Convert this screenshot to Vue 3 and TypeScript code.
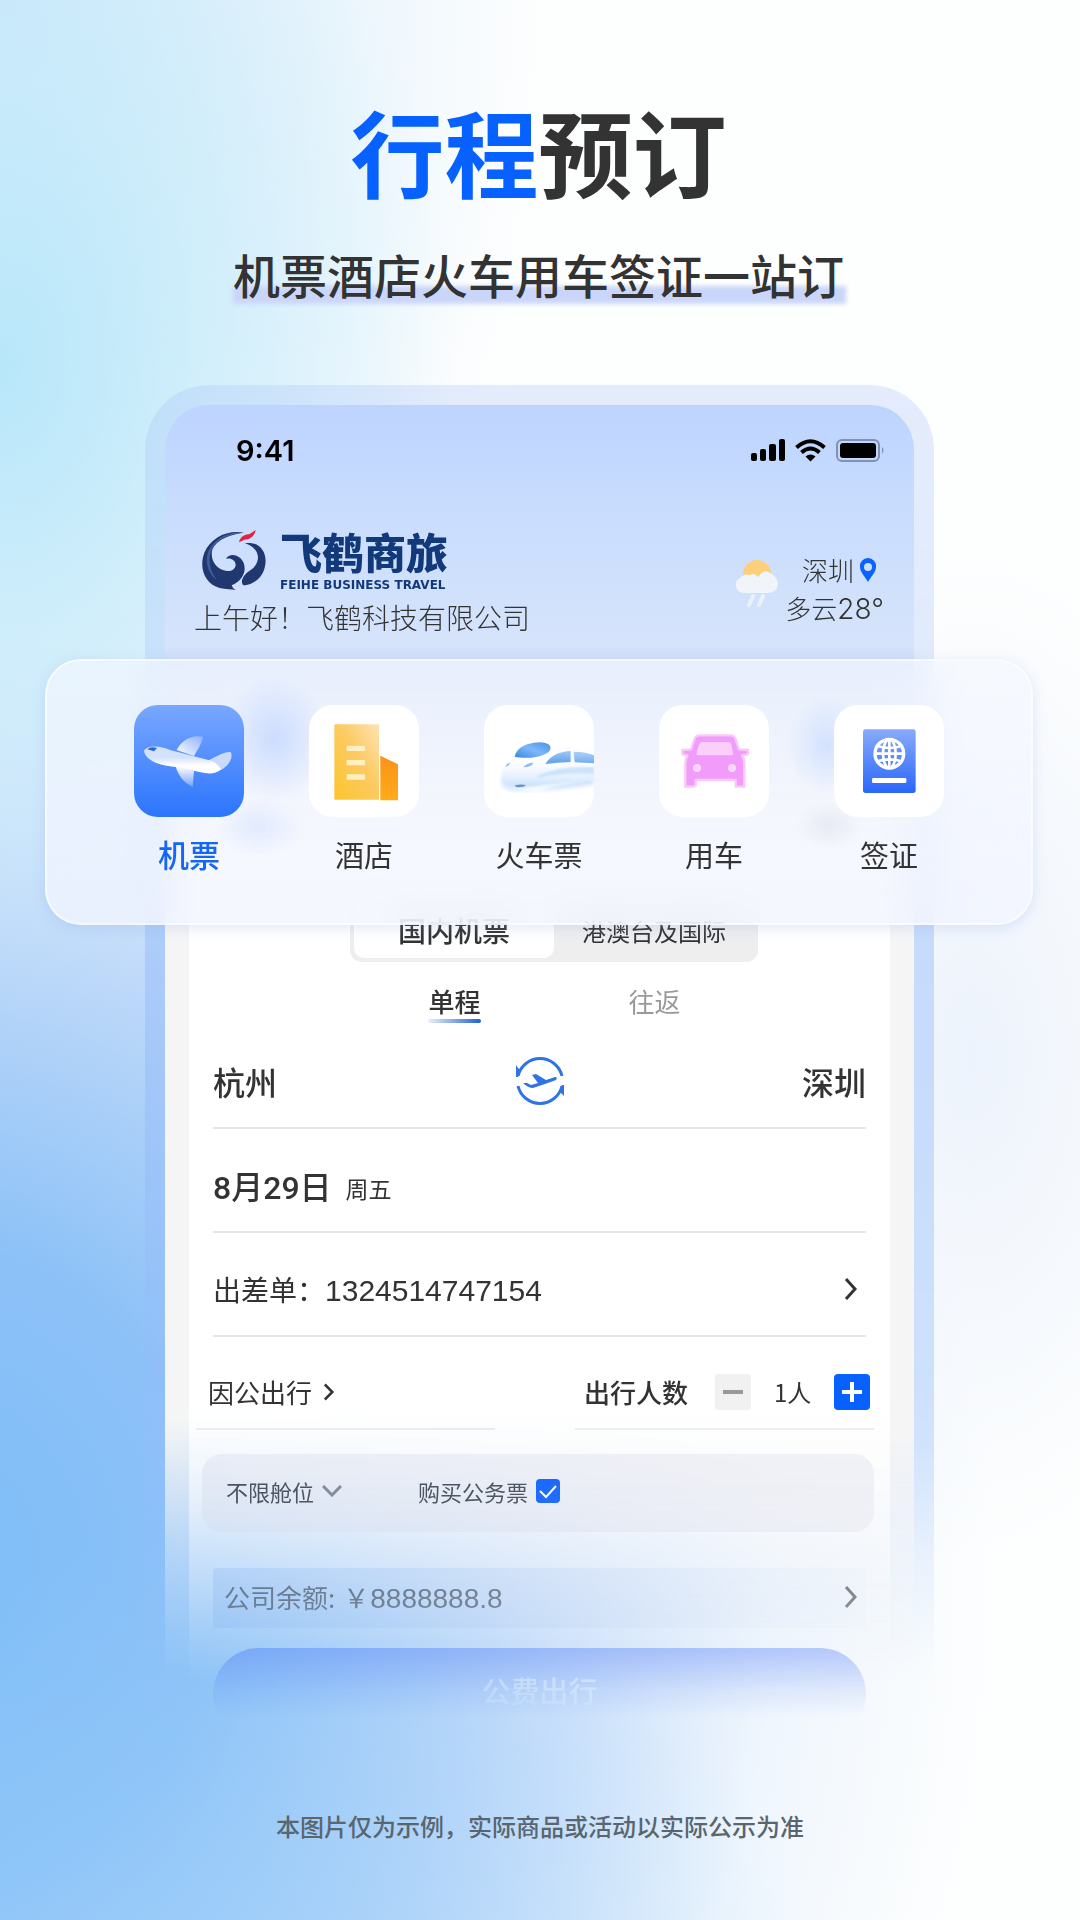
<script setup lang="ts">
import { computed, ref } from 'vue'

type ServiceKey = 'flight' | 'hotel' | 'train' | 'car' | 'visa'

interface Service {
  key: ServiceKey
  label: string
}

const services: Service[] = [
  { key: 'flight', label: '机票' },
  { key: 'hotel', label: '酒店' },
  { key: 'train', label: '火车票' },
  { key: 'car', label: '用车' },
  { key: 'visa', label: '签证' },
]

const activeService = ref<ServiceKey>('flight')
const region = ref<'domestic' | 'international'>('domestic')
const trip = ref<'single' | 'round'>('single')
const cities = ref<[string, string]>(['杭州', '深圳'])
const passengers = ref(1)
const official = ref(true)
const cabin = ref('any')

const passengerText = computed(() => `${passengers.value}人`)

function swapCities(): void {
  cities.value = [cities.value[1], cities.value[0]]
}
function addPassenger(step: number): void {
  passengers.value = Math.max(1, passengers.value + step)
}
</script>

<template>
  <main class="page">
    <header class="hero">
      <h1><span class="accent">行程</span>预订</h1>
      <p class="subtitle">机票酒店火车用车签证一站订</p>
    </header>

    <div class="stage">
      <section class="phone">
        <div class="screen">
          <div class="status">
            <span class="clock">9:41</span>
            <svg class="signals" viewBox="0 0 136 24" aria-hidden="true">
              <rect x="1" y="14" width="6" height="8" rx="2" />
              <rect x="10" y="10" width="6" height="12" rx="2" />
              <rect x="19" y="5" width="7" height="17" rx="2" />
              <rect x="29" y="0" width="6" height="22" rx="2" />
              <g fill="none" stroke="#000" stroke-width="4">
                <path d="M46.500 8.500Q60.500 -4 74.500 8.500" />
                <path d="M51.500 13.500Q60.500 5.500 69.500 13.500" />
              </g>
              <path d="M55.500 17.500Q60.500 13.500 65.500 17.500L60.500 22.500Z" />
              <rect x="87" y="1" width="42" height="21" rx="5" fill="none" stroke="#8390b0" stroke-width="2" />
              <rect x="90" y="4" width="36" height="15" rx="3" />
              <path d="M132 8Q135 11 132 15Z" fill="#8390b0" />
            </svg>
          </div>

          <div class="company">
            <div>
              <div class="brand">
                <svg class="emblem" viewBox="214 474 198 186" aria-hidden="true">
                  <path fill="#20386f" d="M342 485C292 476 244 500 224 545C206 594 228 640 270 651C288 656 305 654 318 657Q307 650 306 643C336 632 352 602 342 576C333 551 300 543 289 563C304 560 317 567 318 581C317 598 298 604 280 597C256 588 243 565 247 541C253 510 298 490 342 485Z" />
                  <path fill="#3d5d9c" d="M342 485C296 480 254 502 236 541C224 575 236 610 262 628C238 596 234 562 247 535C259 505 300 489 342 485Z" />
                  <path fill="#20386f" d="M346 517C390 508 417 548 405 590C396 626 361 646 340 642C331 630 342 610 362 598C393 578 397 534 346 517Z" />
                  <path fill="#e0243f" d="M328 514C332 494 350 490 360 489L378 477C374 499 358 506 345 506Z" />
                </svg>
                <div class="wordmark">
                  <strong>飞鹤商旅</strong>
                  <small>FEIHE BUSINESS TRAVEL</small>
                </div>
              </div>
              <p class="greeting">上午好！飞鹤科技有限公司</p>
            </div>

            <div class="weather">
              <svg class="sky" viewBox="0 0 44 48" aria-hidden="true">
                <circle cx="23" cy="15" r="14" fill="#fdce7b" />
                <path d="M9 34A8 8 0 0 1 6 19Q10 14 16 16Q20 13 24 18Q30 9 36 14Q44 18 44 26Q42 34 34 34Z" fill="#f1f4f9" />
                <path d="M19 37L15 46M29 37L25 46" stroke="#e9f1fb" stroke-width="4" stroke-linecap="round" />
              </svg>
              <div class="forecast">
                <span class="place">深圳
                  <svg class="pin" viewBox="0 0 16 24" aria-hidden="true">
                    <path fill="#0a62ff" fill-rule="evenodd" d="M8 0A8 8 0 0 0 0 9C0 14 6 20 8 24C10 20 16 14 16 9A8 8 0 0 0 8 0ZM8 5A4 4 0 1 1 8 13A4 4 0 1 1 8 5Z" />
                  </svg>
                </span>
                <span>多云<b>28°</b></span>
              </div>
            </div>
          </div>

          <div class="panel">
            <div class="segment">
              <button type="button" :class="{ on: region === 'domestic' }" @click="region = 'domestic'">国内机票</button>
              <button type="button" :class="{ on: region === 'international' }" @click="region = 'international'">港澳台及国际</button>
            </div>

            <div class="trip">
              <button type="button" :class="{ on: trip === 'single' }" @click="trip = 'single'">单程</button>
              <button type="button" :class="{ on: trip === 'round' }" @click="trip = 'round'">往返</button>
            </div>

            <div class="row cities">
              <span>{{ cities[0] }}</span>
              <button type="button" class="swap" aria-label="交换城市" @click="swapCities">
                <svg viewBox="0 0 50 48" aria-hidden="true">
                  <g fill="none" stroke="#2f74e2" stroke-width="3">
                    <path d="M3 19A22.600 22.600 0 0 1 47 19" />
                    <path d="M3 29A22.600 22.600 0 0 0 47 29" />
                  </g>
                  <path fill="#2f74e2" d="M1 8L3 11L5 13L3 20L1 20ZM49 39L47 37L45 35L47 28L49 28Z" />
                  <path fill="#2f74e2" d="M8 26L12 26L16 28L23 26L17 18L21 17L31 23L40 20Q43 20 41 23L30 27L18 31Q13 31 8 26Z" />
                </svg>
              </button>
              <span>{{ cities[1] }}</span>
            </div>

            <div class="row date"><strong>8月29日</strong><span>周五</span></div>

            <div class="row order">
              <span>出差单：<b>1324514747154</b></span>
              <svg class="arrow" viewBox="0 0 14 24" aria-hidden="true"><path d="M2 2L11 12L2 22" /></svg>
            </div>

            <div class="travel">
              <div class="half purpose">
                <span>因公出行</span>
                <svg class="arrow small" viewBox="0 0 14 24" aria-hidden="true"><path d="M2 3L11 12L2 21" /></svg>
              </div>
              <div class="half people">
                <span>出行人数</span>
                <button type="button" class="step minus" aria-label="减少" @click="addPassenger(-1)"></button>
                <output>{{ passengerText }}</output>
                <button type="button" class="step plus" aria-label="增加" @click="addPassenger(1)"></button>
              </div>
            </div>

            <div class="options">
              <div class="cabin">
                <select v-model="cabin" aria-label="舱位">
                  <option value="any">不限舱位</option>
                  <option value="economy">经济舱</option>
                </select>
                <svg viewBox="0 0 20 12" aria-hidden="true"><path d="M1 1L10 10L19 1" fill="none" stroke="#7b8594" stroke-width="3" /></svg>
              </div>
              <label class="official">购买公务票<input v-model="official" type="checkbox" /></label>
            </div>

            <div class="balance">
              <span>公司余额:</span><span class="amount">￥<b>8888888.8</b></span>
              <svg class="arrow" viewBox="0 0 14 24" aria-hidden="true"><path d="M2 2L11 12L2 22" /></svg>
            </div>

            <button type="button" class="submit">公费出行</button>
          </div>
        </div>
      </section>

      <nav class="services">
        <a v-for="item in services" :key="item.key" href="#" :class="{ on: item.key === activeService }" @click.prevent="activeService = item.key">
          <span class="tile" :class="item.key">
            <svg v-if="item.key === 'flight'" viewBox="312 195 330 336" aria-hidden="true">
              <defs>
                <linearGradient id="wingTop" x1="1" y1="0" x2="0" y2="1"><stop offset="0" stop-color="#8db0ff" /><stop offset="1" stop-color="#fff" /></linearGradient>
                <linearGradient id="wingLow" x1="0" y1="0" x2="0" y2="1"><stop offset="0" stop-color="#fff" /><stop offset="1" stop-color="#79a3fd" /></linearGradient>
                <linearGradient id="body" x1="0" y1="0" x2="0" y2="1"><stop offset="0.400" stop-color="#d3e1fb" /><stop offset="0.700" stop-color="#fff" /></linearGradient>
              </defs>
              <path fill="url(#wingTop)" d="M440 330C455 300 485 283 519 290C512 320 500 332 492 348Z" />
              <path fill="#c9dafb" d="M530 362C560 352 575 335 602 336C612 352 594 384 566 392Z" />
              <path fill="url(#body)" d="M342 332C350 316 390 315 420 330L535 360C552 362 560 370 574 388C556 402 540 402 520 398L432 380C390 376 346 362 342 332Z" />
              <path fill="url(#wingLow)" d="M437 378L492 392L488 440C462 430 443 405 437 378Z" />
              <path fill="#2668df" d="M352 328Q362 318 381 324L372 334Z" />
            </svg>
            <svg v-else-if="item.key === 'hotel'" viewBox="833 195 330 336" aria-hidden="true">
              <defs>
                <linearGradient id="tower" x1="1" y1="0" x2="0" y2="1"><stop offset="0" stop-color="#fde3b4" /><stop offset="0.450" stop-color="#fcca62" /><stop offset="1" stop-color="#fcc52c" /></linearGradient>
                <linearGradient id="annex" x1="0" y1="0" x2="0" y2="1"><stop offset="0" stop-color="#fb9218" /><stop offset="1" stop-color="#ffab1a" /></linearGradient>
              </defs>
              <rect x="909" y="253" width="134" height="226" rx="3" fill="url(#tower)" />
              <path d="M1047 347L1100 373V481H1047Z" fill="url(#annex)" />
              <path d="M946 325H1001M946 368H1001M946 411H1001" stroke="#ffefc2" stroke-width="16" />
            </svg>
            <svg v-else-if="item.key === 'train'" viewBox="12 15 330 336" aria-hidden="true">
              <defs>
                <linearGradient id="cockpit" x1="0" y1="1" x2="1" y2="0"><stop offset="0" stop-color="#3a86dd" /><stop offset="0.500" stop-color="#7db7fb" /><stop offset="1" stop-color="#4a93e6" /></linearGradient>
                <linearGradient id="hull" x1="0" y1="0" x2="0" y2="1"><stop offset="0.500" stop-color="#fbfdff" /><stop offset="0.800" stop-color="#e2effd" /><stop offset="1" stop-color="#c3dffa" /></linearGradient>
                <linearGradient id="pane" x1="0" y1="0" x2="0" y2="1"><stop offset="0" stop-color="#9ccafa" /><stop offset="1" stop-color="#5c9fe8" /></linearGradient>
                <filter id="glow"><feGaussianBlur stdDeviation="7" /></filter>
                <filter id="soft"><feGaussianBlur stdDeviation="3" /></filter>
              </defs>
              <path d="M64 242Q130 290 220 258L342 234V252Q200 274 120 274Q60 268 64 242Z" fill="#c4e0fb" filter="url(#glow)" />
              <path d="M62 232C66 200 86 172 108 155C125 126 190 120 210 138L270 140L350 152V240C280 248 215 252 160 260C115 266 58 262 62 232Z" fill="url(#hull)" filter="url(#soft)" />
              <path d="M104 170C110 140 145 127 180 127C218 128 218 150 200 160C170 177 130 175 104 170Z" fill="url(#cockpit)" />
              <path d="M196 192C212 166 240 154 272 153V186Q230 188 196 192Z" fill="url(#pane)" />
              <path d="M281 155Q320 156 342 166V190L284 187Z" fill="url(#pane)" opacity="0.850" />
              <path d="M130 202Q140 188 160 188Q158 200 130 202ZM76 200Q82 188 90 188Q88 198 76 200Z" fill="#8dbdf2" />
              <path d="M170 228Q240 196 346 202V222Q240 216 180 234Z" fill="#cbe3fb" filter="url(#soft)" />
              <path d="M104 256Q122 252 138 255Q130 264 108 261Z" fill="#6a93c9" />
            </svg>
            <svg v-else-if="item.key === 'car'" viewBox="378 195 330 336" aria-hidden="true">
              <g stroke="#f9c9fb" stroke-width="7" fill="#f19bfa" stroke-linejoin="round">
                <path d="M500 286H592Q604 286 608 298L618 328L645 330V343L627 346Q634 356 634 370V440H608V420H488V436L480 440H457V370Q457 356 464 346L448 343V330L474 328L484 298Q488 286 500 286Z" />
              </g>
              <path d="M506 306H588Q596 306 600 342Q601 346 594 346H496Q489 346 491 340Q498 306 506 306Z" fill="#fad0fb" />
              <circle cx="492" cy="384" r="12" fill="#fbd6fc" /><circle cx="597" cy="384" r="12" fill="#fbd6fc" />
            </svg>
            <svg v-else viewBox="898 195 330 336" aria-hidden="true">
              <defs>
                <linearGradient id="cover" x1="0" y1="0" x2="0" y2="1"><stop offset="0" stop-color="#88aafb" /><stop offset="1" stop-color="#2867fb" /></linearGradient>
              </defs>
              <rect x="985" y="268" width="158" height="191" rx="8" fill="url(#cover)" />
              <g fill="none" stroke="#fff" stroke-width="8">
                <circle cx="1064" cy="341" r="43" stroke-width="10" />
                <ellipse cx="1064" cy="341" rx="19" ry="43" />
                <path d="M1064 298V384M1021 341H1107M1028 318Q1064 330 1100 318M1028 364Q1064 352 1100 364" />
              </g>
              <rect x="1012" y="414" width="103" height="15" rx="4" fill="#fff" />
            </svg>
          </span>
          <span class="label">{{ item.label }}</span>
        </a>
      </nav>
    </div>

    <footer class="note">本图片仅为示例，实际商品或活动以实际公示为准</footer>
  </main>
</template>

<style>
body {
  margin: 0;
}
</style>

<style scoped>
.page {
  box-sizing: border-box;
  min-height: 100vh;
  padding-top: 94px;
  padding-bottom: 70px;
  color: #333;
  font-family: "Noto Sans CJK SC", sans-serif;
  background:
    radial-gradient(ellipse 42% 34% at 0% 19%, #b8e7fa 0%, rgba(194, 235, 250, 0.6) 45%, rgba(255, 255, 255, 0) 100%),
    radial-gradient(ellipse 55% 24% at 20% 104%, rgba(150, 205, 250, 0.6) 0%, rgba(255, 255, 255, 0) 100%),
    radial-gradient(ellipse 100% 62% at -8% 82%, #7dbdf7 0%, rgba(134, 190, 247, 0.95) 28%, rgba(178, 209, 248, 0.8) 55%, rgba(222, 236, 252, 0.45) 80%, rgba(255, 255, 255, 0) 100%),
    radial-gradient(ellipse 50% 45% at 0% 0%, #cfe7fa 0%, rgba(255, 255, 255, 0) 100%),
    radial-gradient(ellipse 24% 26% at 90% 55%, #edf3fc 0%, rgba(255, 255, 255, 0) 100%),
    #fdfefe;
}
button,
select {
  padding: 0;
  border: 0;
  background: none;
  color: inherit;
  font: inherit;
}
p,
h1 {
  margin: 0;
}
b {
  font-weight: inherit;
}
.hero {
  display: flex;
  flex-direction: column;
  align-items: center;
  padding-right: 3px;
}
h1 {
  font-size: 94px;
  line-height: 112px;
  font-weight: 700;
}
.accent {
  color: #0661ff;
}
.subtitle {
  position: relative;
  z-index: 0;
  margin-top: 36px;
  font-size: 47px;
  line-height: 64px;
  font-weight: 500;
}
.subtitle::before {
  content: "";
  position: absolute;
  z-index: -1;
  inset: auto -2px 2px 0;
  height: 18px;
  background: #cad6f9;
  filter: blur(2px);
}
.stage {
  position: relative;
  margin-top: 79px;
}
.phone {
  margin: 0 146px 0 145px;
  padding: 20px 20px 0;
  border-radius: 64px 64px 0 0;
  background: linear-gradient(rgba(165, 190, 248, 0.28), rgba(165, 195, 250, 0.3) 280px, rgba(140, 180, 250, 0.42) 550px, rgba(150, 190, 250, 0.4) 1060px, rgba(150, 190, 250, 0) 1300px);
  -webkit-mask-image: linear-gradient(#000 1025px, rgba(0, 0, 0, 0.88) 1115px, rgba(0, 0, 0, 0.68) 1215px, rgba(0, 0, 0, 0.5) 1265px, rgba(0, 0, 0, 0.16) 1305px, transparent 1332px);
  mask-image: linear-gradient(#000 1025px, rgba(0, 0, 0, 0.88) 1115px, rgba(0, 0, 0, 0.68) 1215px, rgba(0, 0, 0, 0.5) 1265px, rgba(0, 0, 0, 0.16) 1305px, transparent 1332px);
}
.screen {
  border-radius: 44px 44px 0 0;
  background: linear-gradient(#bdd4ff, #c8dcfe 100px, #d6e4fb 240px, #cfdffa 255px, #f5f5f5 400px, #f5f5f5 1020px, rgba(245, 245, 245, 0) 1280px);
}
.status {
  display: flex;
  align-items: center;
  justify-content: space-between;
  height: 92px;
  padding: 0 28px 0 71px;
}
.clock {
  color: #000;
  font: 600 29px/40px Inter, sans-serif;
}
.signals {
  width: 136px;
  height: 24px;
}
.company {
  display: flex;
  justify-content: space-between;
  height: 132px;
  padding: 32px 30px 0 29px;
}
.brand {
  display: flex;
  gap: 13px;
  padding-left: 7px;
}
.emblem {
  width: 66px;
  height: 62px;
}
.wordmark {
  display: flex;
  flex-direction: column;
  color: #123a7a;
}
.wordmark strong {
  font-size: 42px;
  line-height: 44px;
  font-weight: 900;
}
.wordmark small {
  margin-top: 4px;
  font: 700 12px/16px "DejaVu Sans", sans-serif;
}
.greeting {
  margin-top: 6px;
  font-size: 28px;
  line-height: 36px;
  font-weight: 300;
}
.weather {
  display: flex;
  gap: 7px;
  padding-top: 22px;
}
.sky {
  width: 44px;
  height: 48px;
  padding-top: 8px;
}
.forecast {
  display: flex;
  flex-direction: column;
  align-items: flex-end;
  font-size: 26px;
  line-height: 38px;
  font-weight: 300;
}
.forecast b {
  font-family: Inter, sans-serif;
  font-size: 28px;
}
.place {
  display: flex;
  align-items: center;
  gap: 6px;
  padding-right: 8px;
}
.pin {
  width: 16px;
  height: 24px;
}
.panel {
  margin: 0 24px;
  padding: 239px 24px 0;
  background: linear-gradient(rgba(255, 255, 255, 0) 120px, #fff 210px, #fff 740px, rgba(255, 255, 255, 0) 1030px);
}
.segment {
  display: flex;
  box-sizing: border-box;
  width: 408px;
  height: 62px;
  margin: 0 auto 0 137px;
  padding: 4px;
  border-radius: 12px;
  background: #eee;
}
.segment button {
  flex: 1;
  padding-bottom: 2px;
  border-radius: 10px;
  font-size: 24px;
}
.segment .on {
  background: #fff;
  font-size: 28px;
  font-weight: 500;
}
.trip {
  display: flex;
  justify-content: center;
  box-sizing: border-box;
  gap: 148px;
  height: 63px;
  padding: 12px 0 0 30px;
}
.trip button {
  position: relative;
  height: 52px;
  color: #999;
  font-size: 26px;
}
.trip .on {
  color: #333;
  font-weight: 500;
}
.trip .on::after {
  content: "";
  position: absolute;
  inset: auto 0 3px 0;
  height: 4px;
  border-radius: 2px;
  background: linear-gradient(90deg, #e9effc, #1d62cf);
}
.row {
  display: flex;
  align-items: center;
  justify-content: space-between;
  box-sizing: border-box;
  height: 104px;
  padding-top: 10px;
  border-bottom: 2px solid #e6e6e6;
}
.cities {
  font-size: 32px;
  font-weight: 500;
}
.swap {
  width: 50px;
  height: 48px;
}
.swap svg {
  display: block;
}
.date {
  justify-content: flex-start;
  gap: 14px;
  padding-top: 16px;
  font-size: 23px;
}
.date strong {
  font: 500 32px/48px Roboto, "Noto Sans CJK SC", sans-serif;
}
.order {
  font-size: 28px;
  padding-right: 8px;
}
.order b {
  font-family: "Liberation Sans", sans-serif;
  font-size: 30px;
}
.arrow {
  width: 14px;
  height: 24px;
  fill: none;
  stroke: #333;
  stroke-width: 3;
}
.arrow.small {
  height: 20px;
}
.travel {
  display: flex;
  justify-content: space-between;
  margin: 0 -8px 0 -17px;
}
.half {
  display: flex;
  align-items: center;
  box-sizing: border-box;
  width: 299px;
  height: 93px;
  padding-top: 18px;
  border-bottom: 2px solid #ededed;
  font-size: 26px;
}
.purpose {
  gap: 10px;
  padding-left: 12px;
}
.people {
  gap: 23px;
  padding-left: 9px;
  font-weight: 500;
}
.people output {
  flex: none;
  font-size: 24px;
  font-weight: 400;
}
.people span {
  flex: none;
  margin-right: 4px;
}
.step {
  position: relative;
  flex: none;
  width: 36px;
  height: 36px;
  border-radius: 4px;
  background: #f1f1f1;
}
.step::before,
.plus::after {
  content: "";
  position: absolute;
  inset: 16px 8px;
  background: #999;
}
.plus {
  background: #0661ff;
}
.plus::before,
.plus::after {
  background: #fff;
}
.plus::after {
  inset: 8px 16px;
}
.options {
  display: flex;
  align-items: center;
  gap: 76px;
  height: 78px;
  margin: 24px -8px 0 -11px;
  padding: 0 0 4px 24px;
  box-sizing: border-box;
  border-radius: 20px;
  background: rgba(228, 229, 238, 0.52);
  color: #40464f;
  font-size: 22px;
}
.cabin {
  display: flex;
  align-items: center;
  gap: 8px;
}
.cabin select {
  width: 88px;
  appearance: none;
}
.cabin svg {
  width: 20px;
  height: 12px;
}
.official {
  display: flex;
  align-items: center;
  gap: 8px;
}
.official input {
  width: 24px;
  height: 24px;
  margin: 0;
  appearance: none;
  border-radius: 4px;
  background: #c4cad6;
}
.official input:checked {
  background: #0a5cff url("data:image/svg+xml,%3Csvg xmlns='http://www.w3.org/2000/svg' viewBox='0 0 24 24'%3E%3Cpath d='M4 12l6 6L20 7' fill='none' stroke='white' stroke-width='2'/%3E%3C/svg%3E");
}
.balance {
  display: flex;
  align-items: center;
  height: 60px;
  box-sizing: border-box;
  margin-top: 36px;
  padding: 0 8px 3px 11px;
  border-radius: 4px;
  background: linear-gradient(90deg, rgba(110, 160, 235, 0.22), rgba(200, 212, 235, 0.1));
  color: #555c66;
  font-size: 26px;
}
.balance .amount {
  margin-left: 8px;
}
.balance b {
  margin-left: 1px;
  font-family: "Liberation Sans", sans-serif;
  font-size: 28px;
}
.balance .arrow {
  margin-left: auto;
  stroke: #555;
}
.submit {
  display: block;
  width: 100%;
  height: 92px;
  margin-top: 20px;
  padding-bottom: 8px;
  border-radius: 46px;
  background: rgba(63, 112, 246, 0.68);
  color: rgba(255, 255, 255, 0.75);
  font-size: 29px;
  font-weight: 500;
}
.services {
  position: absolute;
  inset: 274px 47px auto 45px;
  display: flex;
  justify-content: space-between;
  box-sizing: border-box;
  height: 266px;
  padding: 44px 87px 0;
  border: 2px solid rgba(255, 255, 255, 0.6);
  border-radius: 36px;
  background:
    radial-gradient(ellipse 54px 64px at 228px 78px, rgba(185, 208, 255, 0.65), rgba(185, 208, 255, 0)),
    radial-gradient(ellipse 44px 30px at 212px 166px, rgba(205, 220, 255, 0.5), rgba(205, 220, 255, 0)),
    radial-gradient(ellipse 40px 50px at 780px 84px, rgba(195, 216, 255, 0.65), rgba(195, 216, 255, 0)),
    radial-gradient(ellipse 34px 24px at 782px 164px, rgba(225, 228, 238, 0.7), rgba(225, 228, 238, 0)),
    linear-gradient(rgba(244, 247, 255, 0.64), rgba(242, 245, 255, 0.8));
  -webkit-backdrop-filter: blur(16px);
  backdrop-filter: blur(16px);
  box-shadow: 0 3px 14px rgba(130, 160, 230, 0.24);
}
.services a {
  display: flex;
  flex-direction: column;
  align-items: center;
  width: 110px;
  color: #333;
  text-decoration: none;
}
.tile {
  width: 110px;
  height: 112px;
  overflow: hidden;
  border-radius: 24px;
  background: #fff;
}
.tile.flight {
  background: linear-gradient(#79a7ff, #2b75fd);
}
.tile svg {
  display: block;
  width: 110px;
  height: 112px;
}
.label {
  margin-top: 15px;
  font-size: 29px;
  line-height: 44px;
  white-space: nowrap;
}
.on .label {
  color: #1466f5;
  font-size: 31px;
  font-weight: 500;
}
.note {
  margin-top: 66px;
  color: #59656f;
  font-size: 24px;
  line-height: 40px;
  font-weight: 500;
  text-align: center;
}
</style>
